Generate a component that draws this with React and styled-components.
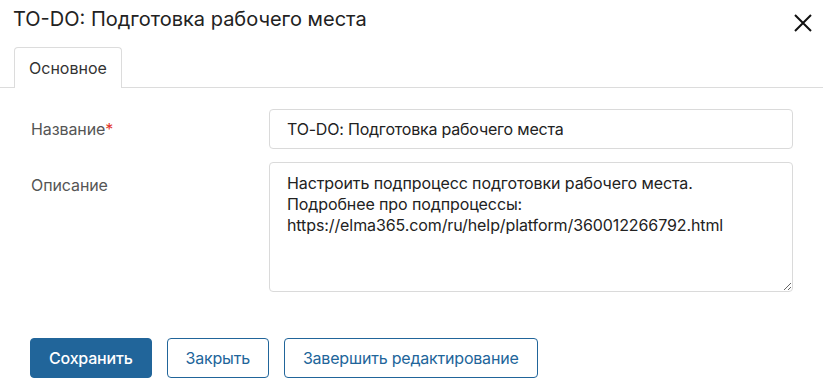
import styled, { createGlobalStyle } from "styled-components";

const GlobalStyle = createGlobalStyle`
  html, body {
    margin: 0;
    padding: 0;
    background: #fff;
  }
  body {
    font-family: Inter, Roboto, "Liberation Sans", Arial, sans-serif;
    color: #222;
  }
`;

const Dialog = styled.div`
  width: 823px;
  height: 388px;
  display: flex;
  flex-direction: column;
  background: #fff;
`;

const Header = styled.div`
  display: flex;
  align-items: flex-start;
  justify-content: space-between;
  padding: 7px 11px 0 13px;
  height: 47px;
  box-sizing: border-box;
`;

const Title = styled.h1`
  margin: 0;
  font-size: 20px;
  line-height: 24px;
  font-weight: 400;
  color: #222;
`;

const CloseButton = styled.button`
  border: none;
  background: none;
  padding: 0;
  margin-top: 7px;
  width: 18px;
  height: 18px;
  cursor: pointer;
  display: flex;
  svg {
    display: block;
  }
`;

const TabBar = styled.div`
  display: flex;
  padding-left: 14px;
  border-bottom: 1px solid #dcdcdc;
`;

const Tab = styled.div`
  padding: 10px 14px;
  font-size: 16px;
  line-height: 20px;
  color: #333;
  background: #fff;
  border: 1px solid #dcdcdc;
  border-bottom: none;
  border-radius: 4px 4px 0 0;
  margin-bottom: -1px;
`;

const Form = styled.div`
  display: grid;
  grid-template-columns: 238px 1fr;
  row-gap: 13px;
  padding: 21px 30px 0 31px;
`;

const Label = styled.label`
  font-size: 16px;
  line-height: 20px;
  color: #555;
  letter-spacing: -0.1px;
  padding-top: ${(p) => p.$offset}px;
`;

const Required = styled.span`
  color: #e2332b;
`;

const Input = styled.input`
  box-sizing: border-box;
  height: 40px;
  width: 100%;
  padding: 0 17px;
  font: inherit;
  font-size: 16px;
  letter-spacing: -0.2px;
  color: #222;
  border: 1px solid #dadada;
  border-radius: 4px;
  outline: none;
`;

const TextArea = styled.textarea`
  box-sizing: border-box;
  height: 130px;
  width: 100%;
  padding: 10px 17px;
  font: inherit;
  font-size: 16px;
  line-height: 21px;
  letter-spacing: -0.1px;
  color: #222;
  border: 1px solid #dadada;
  border-radius: 4px;
  outline: none;
  resize: vertical;
`;

const Footer = styled.div`
  display: flex;
  gap: 15px;
  padding: 46px 0 0 30px;
`;

const Button = styled.button`
  box-sizing: border-box;
  height: 40px;
  padding: 0 18px;
  font-family: inherit;
  font-size: 16px;
  letter-spacing: -0.2px;
  border-radius: 4px;
  cursor: pointer;
  border: 1px solid #21659a;
  background: ${(p) => (p.$primary ? "#21659a" : "#fff")};
  color: ${(p) => (p.$primary ? "#fff" : "#21659a")};
  font-weight: ${(p) => (p.$primary ? 500 : 400)};
`;

const CloseIcon = () => (
  <svg width="18" height="18" viewBox="0 0 18 18">
    <path d="M1 1L17 17M17 1L1 17" stroke="#111" strokeWidth="2" />
  </svg>
);

const description =
  "Настроить подпроцесс подготовки рабочего места.\nПодробнее про подпроцессы:\nhttps://elma365.com/ru/help/platform/360012266792.html";

export default function App() {
  return (
    <>
      <GlobalStyle />
      <Dialog>
        <Header>
          <Title>TO-DO: Подготовка рабочего места</Title>
          <CloseButton aria-label="Закрыть">
            <CloseIcon />
          </CloseButton>
        </Header>
        <TabBar>
          <Tab>Основное</Tab>
        </TabBar>
        <Form>
          <Label $offset={10}>
            Название<Required>*</Required>
          </Label>
          <Input defaultValue="TO-DO: Подготовка рабочего места" />
          <Label $offset={13}>Описание</Label>
          <TextArea defaultValue={description} />
        </Form>
        <Footer>
          <Button $primary>Сохранить</Button>
          <Button>Закрыть</Button>
          <Button>Завершить редактирование</Button>
        </Footer>
      </Dialog>
    </>
  );
}
